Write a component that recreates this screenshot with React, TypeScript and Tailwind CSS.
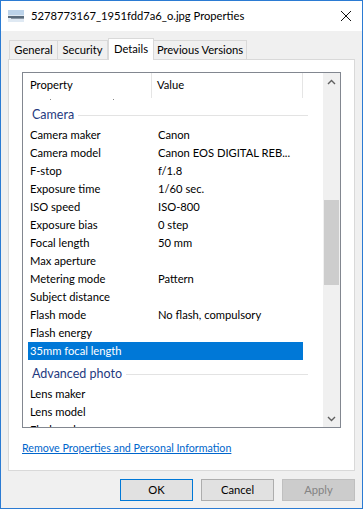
import React from "react";

interface Row {
  name: string;
  value?: string;
  selected?: boolean;
}

const camera: Row[] = [
  { name: "Camera maker", value: "Canon" },
  { name: "Camera model", value: "Canon EOS DIGITAL REB..." },
  { name: "F-stop", value: "f/1.8" },
  { name: "Exposure time", value: "1/60 sec." },
  { name: "ISO speed", value: "ISO-800" },
  { name: "Exposure bias", value: "0 step" },
  { name: "Focal length", value: "50 mm" },
  { name: "Max aperture" },
  { name: "Metering mode", value: "Pattern" },
  { name: "Subject distance" },
  { name: "Flash mode", value: "No flash, compulsory" },
  { name: "Flash energy" },
  { name: "35mm focal length", selected: true },
];

const advanced: Row[] = [
  { name: "Lens maker" },
  { name: "Lens model" },
  { name: "Flash maker" },
];

const PropRow: React.FC<{ row: Row }> = ({ row }) => (
  <div
    className={
      "flex h-[18px] w-[275px] shrink-0 items-center pl-[2px] " +
      (row.selected ? "bg-[#0078d7] text-white" : "text-black")
    }
  >
    <span className="w-[128px] whitespace-nowrap">{row.name}</span>
    <span className="whitespace-nowrap">{row.value}</span>
  </div>
);

const GroupHeader: React.FC<{ title: string }> = ({ title }) => (
  <div className="flex h-[25px] w-[285px] shrink-0 items-center pl-[9px] pt-[3px]">
    <span className="text-[12.5px] text-[#1f3a80] whitespace-nowrap">{title}</span>
    <div className="ml-[4px] h-px flex-1 bg-[#e3e3e3]" />
  </div>
);

const Chevron: React.FC<{ up?: boolean }> = ({ up }) => (
  <svg width="9" height="6" viewBox="0 0 9 6">
    <path
      d={up ? "M1 5 L4.5 1.5 L8 5" : "M1 1 L4.5 4.5 L8 1"}
      fill="none"
      stroke="#606060"
      strokeWidth="1.4"
    />
  </svg>
);

const App: React.FC = () => {
  return (
    <div
      className="flex h-[509px] w-[363px] flex-col border border-[#2b7bd3] bg-[#f0f0f0] text-[11.2px] text-black"
      style={{ fontFamily: "'Segoe UI', Lato, 'Noto Sans', sans-serif" }}
    >
      {/* title bar */}
      <div className="flex h-[30px] shrink-0 items-center bg-white pl-[7px] pr-[10px]">
        <svg width="16" height="12" viewBox="0 0 16 12" className="mr-[7px]">
          <rect x="0" y="0" width="16" height="12" fill="#dfe9f3" />
          <rect x="0" y="0" width="16" height="5" fill="#bcd3ea" />
          <rect x="0" y="6" width="16" height="2" fill="#5a6b7c" />
          <rect x="3" y="8" width="13" height="1" fill="#8b98a6" />
        </svg>
        <span className="flex-1 text-[11.2px] whitespace-nowrap">
          5278773167_1951fdd7a6_o.jpg Properties
        </span>
        <svg width="12" height="12" viewBox="0 0 12 12">
          <path d="M1 1 L11 11 M11 1 L1 11" stroke="#111" strokeWidth="1" />
        </svg>
      </div>

      {/* tabs */}
      <div className="flex h-[28px] shrink-0 items-end pl-[8px] pt-[8px]">
        <div className="flex h-[19px] w-[49px] items-center justify-center border border-b-0 border-[#d9d9d9]">General</div>
        <div className="flex h-[19px] w-[50px] items-center justify-center border border-b-0 border-l-0 border-[#d9d9d9]">Security</div>
        <div className="relative z-10 -mb-px flex h-[22px] w-[46px] items-center justify-center border border-b-0 border-[#d9d9d9] bg-white">
          Details
        </div>
        <div className="flex h-[19px] w-[93px] items-center justify-center border border-b-0 border-l-0 border-[#d9d9d9]">Previous Versions</div>
      </div>

      {/* panel */}
      <div className="mx-[7px] flex h-[412px] shrink-0 flex-col border border-[#d9d9d9] bg-white px-[13px] pt-[12px]">
        <div className="flex h-[356px] shrink-0 border border-[#828790]">
          <div className="flex flex-1 flex-col overflow-hidden">
            <div className="flex h-[25px] shrink-0 items-center">
              <div className="flex h-full w-[129px] items-center border-r border-[#e5e5e5] pl-[7px]">Property</div>
              <div className="flex h-full w-[151px] items-center border-r border-[#e5e5e5] pl-[5px]">Value</div>
            </div>
            <div className="flex h-[3px] shrink-0">
              <span className="ml-[27px] mt-[1px] h-px w-px bg-[#888]" />
              <span className="ml-[62px] mt-[1px] h-px w-px bg-[#888]" />
            </div>
            <GroupHeader title="Camera" />
            <div className="flex flex-col pl-[5px]">
              {camera.map((r) => (
                <PropRow key={r.name} row={r} />
              ))}
            </div>
            <GroupHeader title="Advanced photo" />
            <div className="flex flex-col pl-[5px]">
              {advanced.map((r) => (
                <PropRow key={r.name} row={r} />
              ))}
            </div>
          </div>
          {/* scrollbar */}
          <div className="flex w-[17px] shrink-0 flex-col items-center bg-[#f0f0f0]">
            <div className="flex h-[17px] w-full items-center justify-center">
              <Chevron up />
            </div>
            <div className="mt-[110px] h-[85px] w-[15px] bg-[#cdcdcd]" />
            <div className="flex-1" />
            <div className="flex h-[17px] w-full items-center justify-center">
              <Chevron />
            </div>
          </div>
        </div>
        <div className="mt-[12px]">
          <span className="text-[10.7px] text-[#0066cc] underline">Remove Properties and Personal Information</span>
        </div>
      </div>

      {/* buttons */}
      <div className="flex justify-end gap-[8px] pr-[7px] pt-[8px]">
        <div className="flex h-[22px] w-[73px] items-center justify-center border border-[#0078d7] bg-[#e1e1e1]">OK</div>
        <div className="flex h-[22px] w-[73px] items-center justify-center border border-[#adadad] bg-[#e1e1e1]">Cancel</div>
        <div className="flex h-[22px] w-[73px] items-center justify-center border border-[#bfbfbf] bg-[#cccccc] text-[#838383]">
          Apply
        </div>
      </div>
    </div>
  );
};

export default App;
